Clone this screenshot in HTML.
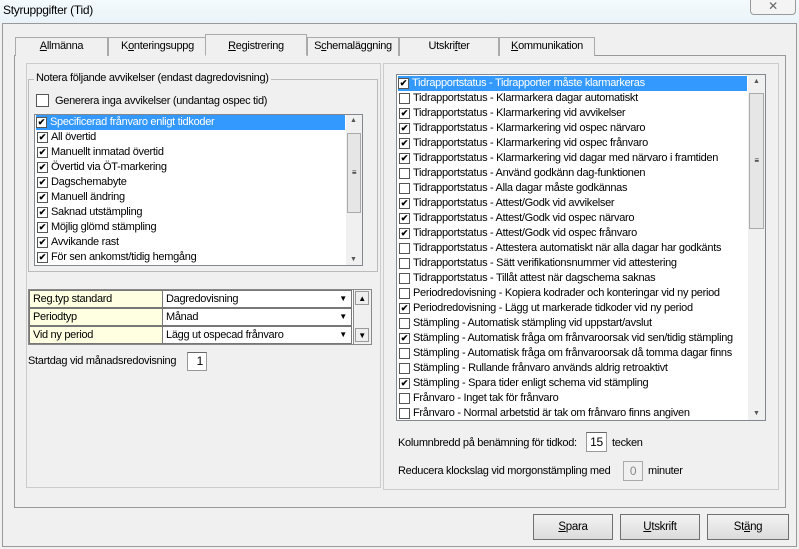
<!DOCTYPE html>
<html><head><meta charset="utf-8"><style>
*{box-sizing:border-box}
body{margin:0;width:799px;height:549px;overflow:hidden;background:#f0f0f0;font-family:"Liberation Sans",Arial,sans-serif;font-size:11px;letter-spacing:-0.3px;color:#000;position:relative}
.a{position:absolute;white-space:nowrap}
.tb{background:linear-gradient(#f4fafd,#e9f3f8);}
.tab{position:absolute;top:37px;height:19px;border:1px solid #aaa;border-bottom:none;background:#f0f0f0;text-align:center;line-height:17px}
.list{background:#fff;border:1px solid #828790}
.row{position:absolute;left:2px;height:15px;line-height:15px;white-space:nowrap;display:flex;align-items:center}
.cb{display:inline-block;flex:none;width:11px;height:11px;border:1px solid #555;background:#fff;margin-right:3px;font-size:9px;line-height:9px;text-align:center;font-weight:bold;color:#000;letter-spacing:0}
.sel{background:#3399ff;color:#fff}
.sb{position:absolute;background:#f0f0f0}
.btn{position:absolute;top:514px;height:26px;border:1px solid #707070;background:linear-gradient(#f2f2f2,#dcdcdc);text-align:center;line-height:24px;font-size:11.5px}
.cell{position:absolute;height:18px;line-height:16px;padding-left:3px;border:1px solid #777;}
.dd{position:absolute;width:14px;height:14px;font-size:8px;text-align:center;line-height:14px}
</style></head><body>
<div class="a tb" style="left:0;top:0;width:799px;height:24px"></div>
<div class="a" style="left:3px;top:3px;font-size:12px">Styruppgifter (Tid)</div>
<div class="a" style="left:750px;top:0;width:46px;height:15px;border:1px solid #999;border-top:none;border-radius:0 0 4px 4px;background:#f4f4f4;text-align:center;font-size:12px;line-height:12px;color:#666">✕</div>
<div class="a" style="left:2px;top:23px;width:795px;height:524px;border:1px solid #999;background:#f0f0f0"></div>
<div class="a" style="left:14px;top:55px;width:772px;height:453px;border:1px solid #999;background:#f0f0f0"></div>
<div class="tab" style="left:15px;width:93px"><u>A</u>llmänna</div>
<div class="tab" style="left:108px;width:99px">K<u>o</u>nteringsuppg</div>
<div class="tab" style="left:205px;top:34px;height:22px;width:102px;background:#f0f0f0;line-height:23px;border-bottom:1px solid #f0f0f0"><u>R</u>egistrering</div>
<div class="tab" style="left:307px;width:92px">S<u>c</u>hemaläggning</div>
<div class="tab" style="left:399px;width:100px">Utskri<u>f</u>ter</div>
<div class="tab" style="left:499px;width:96px"><u>K</u>ommunikation</div>
<div class="a" style="left:26px;top:63px;width:355px;height:425px;border:1px solid #ccc"></div>
<div class="a" style="left:28px;top:79px;width:350px;height:193px;border:1px solid #bbb"></div>
<div class="a" style="left:34px;top:72px;background:#f0f0f0;padding:0 2px">Notera följande avvikelser (endast dagredovisning)</div>
<div class="a" style="left:36px;top:94px;display:flex;align-items:center"><span class="cb" style="width:13px;height:13px;margin-right:6px"></span>Generera inga avvikelser (undantag ospec tid)</div>
<div class="a list" style="left:34px;top:114px;width:329px;height:152px">
<div class="row sel" style="top:0;width:309px;left:1px"><span class="cb">✔</span>Specificerad frånvaro enligt tidkoder</div>
<div class="row" style="top:15px"><span class="cb">✔</span>All övertid</div>
<div class="row" style="top:30px"><span class="cb">✔</span>Manuellt inmatad övertid</div>
<div class="row" style="top:45px"><span class="cb">✔</span>Övertid via ÖT-markering</div>
<div class="row" style="top:60px"><span class="cb">✔</span>Dagschemabyte</div>
<div class="row" style="top:75px"><span class="cb">✔</span>Manuell ändring</div>
<div class="row" style="top:90px"><span class="cb">✔</span>Saknad utstämpling</div>
<div class="row" style="top:105px"><span class="cb">✔</span>Möjlig glömd stämpling</div>
<div class="row" style="top:120px"><span class="cb">✔</span>Avvikande rast</div>
<div class="row" style="top:135px"><span class="cb">✔</span>För sen ankomst/tidig hemgång</div>
<div class="sb" style="left:311px;top:0;width:16px;height:150px"><div class="a" style="left:1px;top:18px;width:14px;height:80px;border:1px solid #aaa;background:#e6e6e6;text-align:center;line-height:78px;font-size:8px">≡</div><div class="a" style="top:2px;left:4px;font-size:7px;color:#555">▲</div><div class="a" style="bottom:2px;left:4px;font-size:7px;color:#555">▼</div></div>
</div>
<div class="a" style="left:28px;top:289px;width:344px;height:56px;border:1px solid #888;background:#fff"></div>
<div class="cell" style="left:29px;top:290px;width:134px;background:#ffffe1">Reg.typ standard</div>
<div class="cell" style="left:29px;top:308px;width:134px;background:#ffffe1">Periodtyp</div>
<div class="cell" style="left:29px;top:326px;width:134px;background:#ffffe1">Vid ny period</div>
<div class="cell" style="left:162px;top:290px;width:190px;background:#fff">Dagredovisning</div>
<div class="cell" style="left:162px;top:308px;width:190px;background:#fff">Månad</div>
<div class="cell" style="left:162px;top:326px;width:190px;background:#fff">Lägg ut ospecad frånvaro</div>
<div class="dd" style="left:336px;top:292px">▼</div><div class="dd" style="left:336px;top:310px">▼</div><div class="dd" style="left:336px;top:328px">▼</div>
<div class="a" style="left:353px;top:290px;width:18px;height:54px;background:#f0f0f0;border-left:1px solid #888"></div>
<div class="dd" style="left:355px;top:291px;border:1px solid #999;background:#eee">▲</div>
<div class="dd" style="left:355px;top:328px;border:1px solid #999;background:#eee">▼</div>
<div class="a" style="left:28px;top:355px">Startdag vid månadsredovisning</div>
<div class="a" style="left:187px;top:352px;width:20px;height:19px;background:#fff;border:1px solid #999;border-top-color:#666;text-align:right;padding-right:3px;line-height:17px;font-size:12px">1</div>
<div class="a" style="left:383px;top:63px;width:396px;height:427px;border:1px solid #ccc"></div>
<div class="a list" style="left:396px;top:74px;width:370px;height:347px">
<div class="row sel" style="top:1px;width:349px;left:1px"><span class="cb">✔</span>Tidrapportstatus - Tidrapporter måste klarmarkeras</div>
<div class="row" style="top:16px"><span class="cb"></span>Tidrapportstatus - Klarmarkera dagar automatiskt</div>
<div class="row" style="top:31px"><span class="cb">✔</span>Tidrapportstatus - Klarmarkering vid avvikelser</div>
<div class="row" style="top:46px"><span class="cb">✔</span>Tidrapportstatus - Klarmarkering vid ospec närvaro</div>
<div class="row" style="top:61px"><span class="cb">✔</span>Tidrapportstatus - Klarmarkering vid ospec frånvaro</div>
<div class="row" style="top:76px"><span class="cb">✔</span>Tidrapportstatus - Klarmarkering vid dagar med närvaro i framtiden</div>
<div class="row" style="top:91px"><span class="cb"></span>Tidrapportstatus - Använd godkänn dag-funktionen</div>
<div class="row" style="top:106px"><span class="cb"></span>Tidrapportstatus - Alla dagar måste godkännas</div>
<div class="row" style="top:121px"><span class="cb">✔</span>Tidrapportstatus - Attest/Godk vid avvikelser</div>
<div class="row" style="top:136px"><span class="cb">✔</span>Tidrapportstatus - Attest/Godk vid ospec närvaro</div>
<div class="row" style="top:151px"><span class="cb">✔</span>Tidrapportstatus - Attest/Godk vid ospec frånvaro</div>
<div class="row" style="top:166px"><span class="cb"></span>Tidrapportstatus - Attestera automatiskt när alla dagar har godkänts</div>
<div class="row" style="top:181px"><span class="cb"></span>Tidrapportstatus - Sätt verifikationsnummer vid attestering</div>
<div class="row" style="top:196px"><span class="cb"></span>Tidrapportstatus - Tillåt attest när dagschema saknas</div>
<div class="row" style="top:211px"><span class="cb"></span>Periodredovisning - Kopiera kodrader och konteringar vid ny period</div>
<div class="row" style="top:226px"><span class="cb">✔</span>Periodredovisning - Lägg ut markerade tidkoder vid ny period</div>
<div class="row" style="top:241px"><span class="cb"></span>Stämpling - Automatisk stämpling vid uppstart/avslut</div>
<div class="row" style="top:256px"><span class="cb">✔</span>Stämpling - Automatisk fråga om frånvaroorsak vid sen/tidig stämpling</div>
<div class="row" style="top:271px"><span class="cb"></span>Stämpling - Automatisk fråga om frånvaroorsak då tomma dagar finns</div>
<div class="row" style="top:286px"><span class="cb"></span>Stämpling - Rullande frånvaro används aldrig retroaktivt</div>
<div class="row" style="top:301px"><span class="cb">✔</span>Stämpling - Spara tider enligt schema vid stämpling</div>
<div class="row" style="top:316px"><span class="cb"></span>Frånvaro - Inget tak för frånvaro</div>
<div class="row" style="top:331px"><span class="cb"></span>Frånvaro - Normal arbetstid är tak om frånvaro finns angiven</div>
<div class="sb" style="left:351px;top:0;width:17px;height:345px"><div class="a" style="left:1px;top:18px;width:15px;height:136px;border:1px solid #aaa;background:#e6e6e6;text-align:center;line-height:134px;font-size:8px">≡</div><div class="a" style="top:3px;left:5px;font-size:7px;color:#555">▲</div><div class="a" style="bottom:3px;left:5px;font-size:7px;color:#555">▼</div></div>
</div>
<div class="a" style="left:398px;top:437px">Kolumnbredd på benämning för tidkod:</div>
<div class="a" style="left:586px;top:432px;width:21px;height:20px;background:#fff;border:1px solid #999;border-top-color:#666;text-align:center;line-height:18px;font-size:12px">15</div>
<div class="a" style="left:612px;top:437px">tecken</div>
<div class="a" style="left:398px;top:465px">Reducera klockslag vid morgonstämpling med</div>
<div class="a" style="left:623px;top:461px;width:20px;height:20px;border:1px solid #aaa;text-align:center;line-height:18px;color:#888;font-size:12px">0</div>
<div class="a" style="left:648px;top:465px">minuter</div>
<div class="btn" style="left:533px;width:80px"><u>S</u>para</div>
<div class="btn" style="left:620px;width:80px"><u>U</u>tskrift</div>
<div class="btn" style="left:707px;width:82px">St<u>ä</u>ng</div>
</body></html>
